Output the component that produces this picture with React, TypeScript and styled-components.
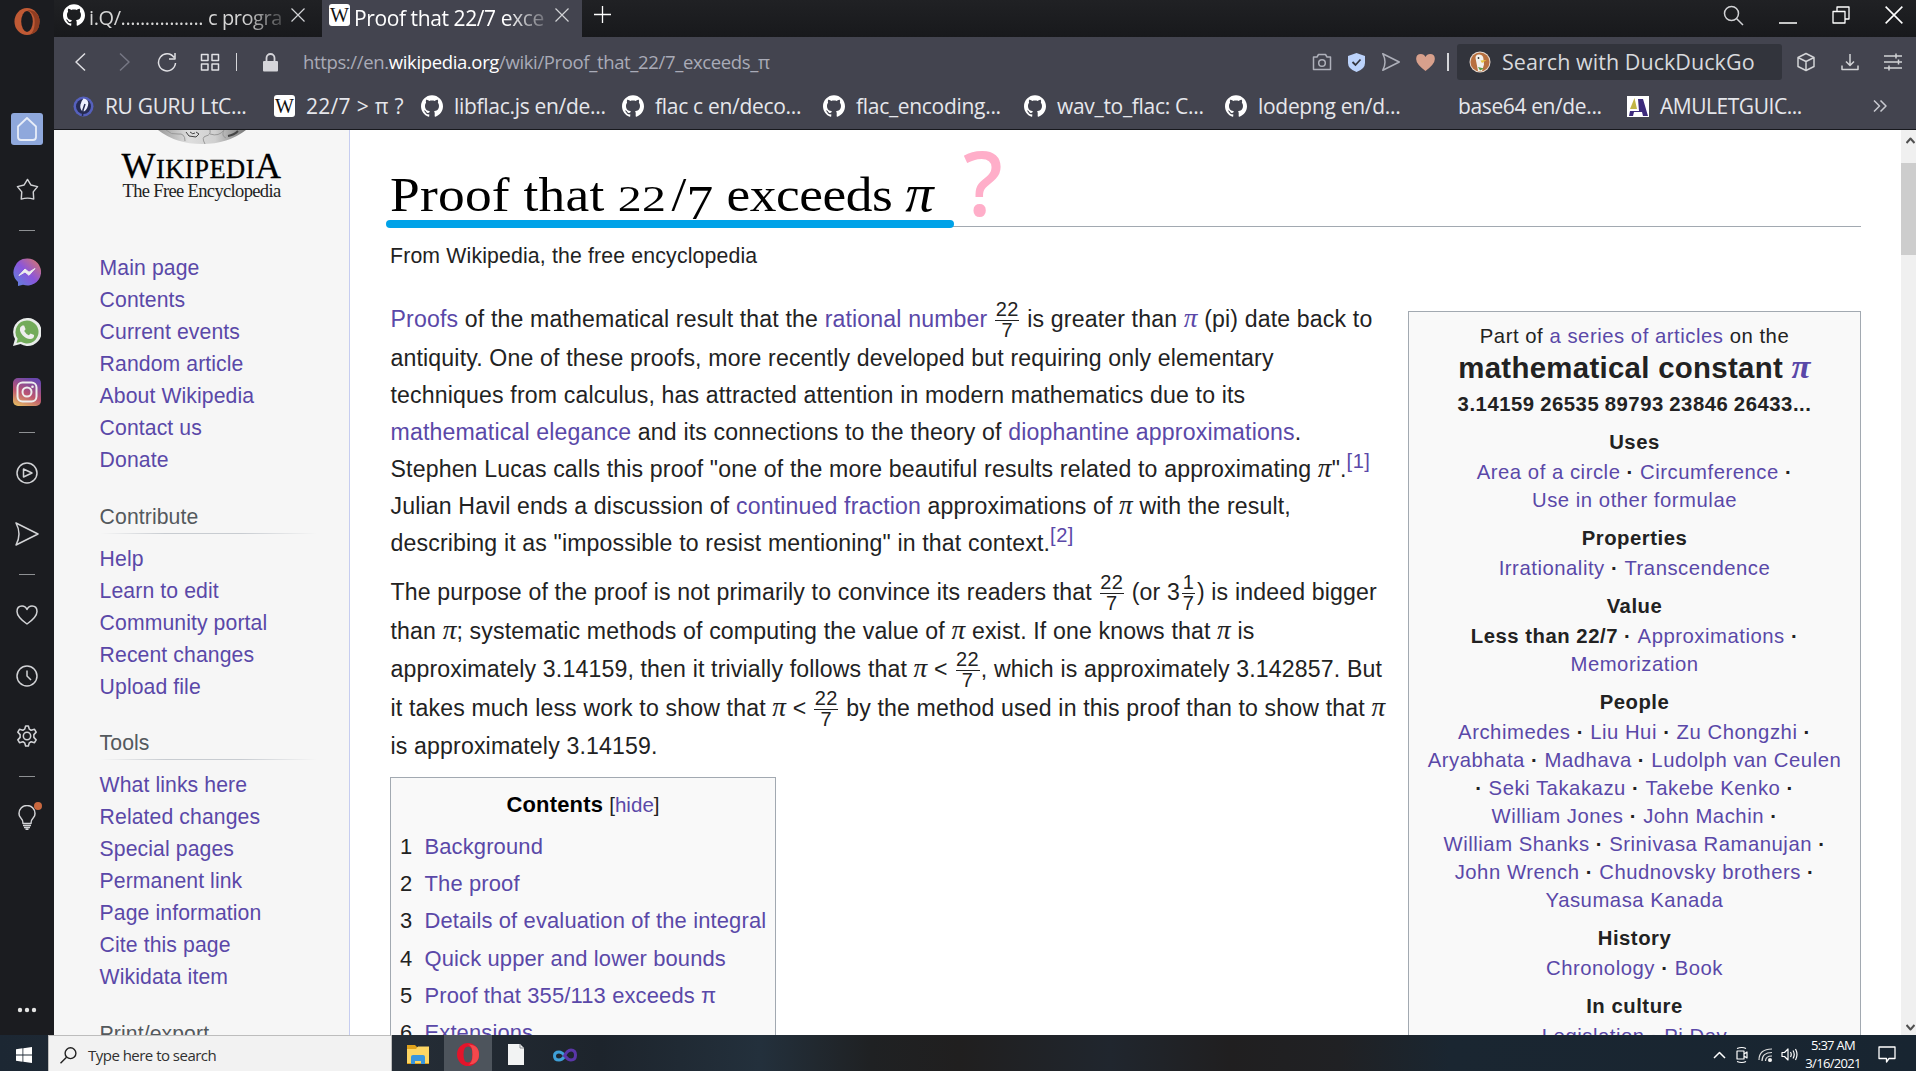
import React from "react";
import styled, { createGlobalStyle, css } from "styled-components";
import { SiGithub } from "react-icons/si";

const sans = `"Liberation Sans", Arial, sans-serif`;
const serif = `"Liberation Serif", "Times New Roman", serif`;
const ui = `"Open Sans", "Segoe UI", sans-serif`;
const visited = "#5a48a8";

const Global = createGlobalStyle`
  * { box-sizing: border-box; }
  html, body { margin: 0; padding: 0; overflow: hidden; background: #1b1c20; }
  svg { display: block; flex: none; }
`;

const Screen = styled.div`
  display: flex;
  flex-direction: column;
  width: 1916px;
  height: 1071px;
  overflow: hidden;
  font-family: ${sans};
`;
const Browser = styled.div`
  display: flex;
  height: 1035px;
`;

/* ---------- Opera side rail ---------- */
const Rail = styled.aside`
  width: 54px;
  flex: none;
  display: flex;
  flex-direction: column;
  align-items: center;
  background: #1b1c20;
`;
const RailItem = styled.div<{ $mt: number }>`
  position: relative;
  height: 32px;
  width: 32px;
  flex: none;
  margin-top: ${(p) => p.$mt}px;
  display: flex;
  align-items: center;
  justify-content: center;
`;
const HomeTile = styled(RailItem)`
  background: #8fa8dc;
  border-radius: 3px;
`;
const Dash = styled.div<{ $mt: number }>`
  width: 16px;
  height: 1px;
  flex: none;
  margin-top: ${(p) => p.$mt}px;
  background: #8e9093;
`;
const Dot = styled.span`
  position: absolute;
  right: 1px;
  top: 1px;
  width: 8px;
  height: 8px;
  border-radius: 50%;
  background: #c9683f;
`;

/* ---------- Browser chrome ---------- */
const Main = styled.div`
  width: 1862px;
  display: flex;
  flex-direction: column;
`;
const TabStrip = styled.div`
  height: 37px;
  flex: none;
  display: flex;
  background: linear-gradient(#202124, #18191c);
`;
const Tab = styled.div<{ $active?: boolean; $w: number; $pr: number }>`
  width: ${(p) => p.$w}px;
  height: 37px;
  padding: 0 ${(p) => p.$pr}px 7px ${(p) => (p.$active ? 7 : 9)}px;
  display: flex;
  align-items: center;
  background: ${(p) => (p.$active ? "#43444f" : "transparent")};
  color: ${(p) => (p.$active ? "#fff" : "#d6d6d6")};
`;
const TabTitle = styled.span<{ $size: number; $ls: number }>`
  margin-left: 4px;
  margin-right: auto;
  padding-top: 6px;
  white-space: nowrap;
  font: ${(p) => p.$size}px/30px ${ui};
  letter-spacing: ${(p) => p.$ls}px;
  mask-image: linear-gradient(90deg, #000 80%, rgba(0, 0, 0, 0.25) 100%);
`;
const NewTab = styled.div`
  padding: 5px 0 0 11px;
`;
const WindowButtons = styled.div`
  margin-left: auto;
  height: 30px;
  padding-right: 13px;
  display: flex;
  align-items: center;
  gap: 35px;
`;
const Toolbar = styled.div`
  height: 50px;
  flex: none;
  display: flex;
  align-items: center;
  padding: 0 13px 0 17px;
  background: #43444f;
`;
const NavIcons = styled.div`
  display: flex;
  align-items: center;
  gap: 23px;
`;
const Divider = styled.i<{ $w: number; $ml: number; $mr: number }>`
  width: ${(p) => p.$w}px;
  height: 18px;
  margin: 0 ${(p) => p.$mr}px 0 ${(p) => p.$ml}px;
  background: #d5d6da;
`;
const Url = styled.span`
  flex: 1;
  margin-left: 25px;
  padding-bottom: 1px;
  font: 18.5px/28px ${ui};
  letter-spacing: -0.36px;
  color: #a9abb7;
  white-space: nowrap;
  b {
    font-weight: 400;
    color: #fff;
  }
`;
const ActionIcons = styled.div`
  display: flex;
  align-items: center;
  gap: 16.5px;
`;
const SearchBox = styled.div`
  width: 325px;
  height: 36px;
  padding-left: 12px;
  display: flex;
  align-items: center;
  gap: 11px;
  border-radius: 3px;
  background: #32343c;
  color: #d8d9dd;
  font: 21.5px/30px ${ui};
  letter-spacing: 0.05px;
  white-space: nowrap;
`;
const EndIcons = styled.div`
  margin-left: 14px;
  display: flex;
  align-items: center;
  gap: 23.5px;
`;
const Bookmarks = styled.div`
  height: 43px;
  flex: none;
  display: flex;
  align-items: center;
  padding: 0 29px 4px 19px;
  background: #43444f;
  border-bottom: 1px solid #17181d;
  color: #e6e7ec;
`;
const Bookmark = styled.div<{ $w: number; $ls: number }>`
  width: ${(p) => p.$w}px;
  flex: none;
  display: flex;
  align-items: center;
  gap: 11px;
  white-space: nowrap;
  font: 21px/28px ${ui};
  letter-spacing: ${(p) => p.$ls}px;
`;
const IconSlot = styled.span`
  width: 21px;
  height: 21px;
  flex: none;
`;
const More = styled.div`
  margin-left: auto;
`;
const WTile = styled.span`
  width: 21px;
  height: 22px;
  flex: none;
  border-radius: 3px;
  background: #fff;
  color: #111;
  font: 20px/23px ${serif};
  letter-spacing: 0;
  display: flex;
  justify-content: center;
`;

/* ---------- Page ---------- */
const Page = styled.div`
  height: 905px;
  display: flex;
  overflow: hidden;
  background: #fff;
`;
const SideNav = styled.nav`
  width: 296px;
  flex: none;
  overflow: hidden;
  background: #f6f6f6;
  border-right: 1px solid #c6cdf0;
`;
const Logo = styled.div`
  height: 122px;
  display: flex;
  flex-direction: column;
  align-items: center;
  color: #000;
`;
const Wordmark = styled.div`
  height: 34px;
  margin-top: 4px;
  font: 26.5px/34px ${serif};
  letter-spacing: 0.5px;
  white-space: nowrap;
  -webkit-text-stroke: 0.3px #000;
  span {
    font-size: 36px;
  }
`;
const Tagline = styled.div`
  margin-top: -2px;
  font: 18.5px/20px ${serif};
  color: #222;
  letter-spacing: -0.65px;
  white-space: nowrap;
`;
const NavGroup = styled.section<{ $h: number }>`
  height: ${(p) => p.$h}px;
  padding-left: 45.6px;
  font-size: 21.2px;
  line-height: 32px;
  letter-spacing: 0.1px;
`;
const NavTitle = styled.h3`
  height: 42px;
  margin: 0;
  font-size: 21.2px;
  font-weight: 400;
  line-height: 32px;
  color: #54595d;
  background: linear-gradient(90deg, transparent, #c8ccd1 30%, #c8ccd1 65%, transparent) 0 32px / 217px 1px no-repeat;
`;
const NavLink = styled.a`
  display: block;
  height: 32px;
  color: ${visited};
`;
const Content = styled.article`
  position: relative;
  width: 1551px;
  flex: none;
  padding: 0 40px 0 40px;
  color: #222;
`;
const Title = styled.h1`
  height: 97px;
  margin: 0;
  padding-top: 37px;
  border-bottom: 1px solid #a2a9b1;
  color: #000;
  font: 400 49px/56px ${serif};
  white-space: nowrap;
`;
const TitleText = styled.span`
  display: inline-block;
  transform: scaleX(1.09);
  transform-origin: left;
  letter-spacing: 0.22px;
`;
const TitleTail = styled.span`
  letter-spacing: -0.4px;
`;
const OldStyle = styled.span<{ $drop?: boolean }>`
  display: inline-block;
  line-height: 1;
  ${(p) =>
    p.$drop
      ? css`
          transform: translateY(8px);
        `
      : css`
          font-size: 36px;
          transform: scaleX(1.22);
          transform-origin: left;
          margin-right: 12.5px;
        `}
`;
const Marker = styled.div`
  position: absolute;
  left: 36px;
  top: 90px;
  width: 568px;
  height: 8px;
  border-radius: 4px;
  background: #00a2e8;
`;
const Question = styled.div`
  position: absolute;
  left: 613px;
  top: 7px;
  font: 500 89px/90px "Noto Sans", sans-serif;
  color: #ffaec9;
`;
const Columns = styled.div`
  display: flex;
  justify-content: space-between;
`;
const Body = styled.div`
  width: 1000px;
`;
const Sub = styled.div`
  height: 73px;
  padding-top: 12px;
  font-size: 21.25px;
  line-height: 34px;
  letter-spacing: 0.16px;
`;
const Para = styled.div`
  margin: 0 0 11px 0.5px;
  font-size: 23.1px;
`;
const Line = styled.div<{ $h?: number }>`
  height: ${(p) => p.$h ?? 37}px;
  line-height: 37px;
  letter-spacing: 0.155px;
  white-space: nowrap;
`;
const A = styled.a`
  color: ${visited};
`;
const Pi = styled.span`
  font-family: ${serif};
  font-style: italic;
  font-size: 1.18em;
  line-height: 1;
`;
const TitlePi = styled(Pi)`
  font-size: 1.06em;
`;
const Sup = styled.a`
  position: relative;
  top: -9px;
  font-size: 0.87em;
  line-height: 1;
  letter-spacing: 0.5px;
  color: ${visited};
`;
const FracBox = styled.span<{ $m: number }>`
  display: inline-flex;
  flex-direction: column;
  align-items: center;
  margin: 0 ${(p) => p.$m}px;
  vertical-align: 10.5px;
  font-size: 20px;
  line-height: 18px;
  letter-spacing: 0.4px;
  span:first-child {
    padding: 0 0.5px 1.5px;
    border-bottom: 1px solid #222;
  }
`;
const Toc = styled.div`
  width: 386px;
  height: 300px;
  margin-top: 12px;
  padding: 9px 9px;
  border: 1px solid #a2a9b1;
  background: #f9f9f9;
  font-size: 21.95px;
`;
const TocTitle = styled.div`
  height: 40px;
  line-height: 36px;
  text-align: center;
  b {
    color: #000;
    letter-spacing: 0.2px;
  }
  span {
    font-size: 20.6px;
  }
`;
const TocRow = styled.div`
  display: flex;
  height: 37.2px;
  line-height: 39px;
  letter-spacing: 0.14px;
  white-space: nowrap;
  span {
    width: 24.5px;
    flex: none;
  }
`;
const Info = styled.aside`
  width: 453px;
  height: 800px;
  margin-top: 84px;
  padding-top: 10px;
  border: 1px solid #a2a9b1;
  background: #f9f9f9;
  text-align: center;
  font-size: 20.3px;
  letter-spacing: 0.53px;
  line-height: 28px;
  white-space: nowrap;
`;
const InfoTitle = styled.div`
  height: 34px;
  line-height: 35px;
  font-size: 29.4px;
  font-weight: 700;
  letter-spacing: 0.3px;
`;
const Digits = styled.div`
  height: 34px;
  line-height: 41px;
  display: flex;
  justify-content: center;
  gap: 5.5px;
  font-weight: 700;
`;
const InfoHead = styled.div`
  margin: 10.2px 0 1.8px;
  font-weight: 700;
`;
const InfoRow = styled.div`
  height: 28px;
`;
const ScrollBar = styled.div`
  width: 15px;
  flex: none;
  display: flex;
  flex-direction: column;
  background: #f0f0f0;
`;
const Arrow = styled.div`
  height: 33px;
  padding: 7px 0 0 5px;
`;
const Thumb = styled.div`
  height: 92px;
  background: #cdcdcd;
`;
const DownArrow = styled.div`
  margin-top: auto;
  padding: 0 0 4px 5px;
`;

/* ---------- Taskbar ---------- */
const Taskbar = styled.div`
  height: 36px;
  display: flex;
  align-items: center;
  color: #fff;
  background: linear-gradient(90deg, #1c2733 0, #252d36 400px, #1d242c 600px, #23303c 760px, #1f2123 870px, #201f1f 960px, #20262e 1110px, #201f20 1230px, #202124 1340px, #1a2631 1450px, #182531 1916px);
`;
const Start = styled.div`
  width: 48px;
  height: 36px;
  display: flex;
  align-items: center;
  justify-content: center;
  padding-top: 3px;
`;
const TaskSearch = styled.div`
  width: 344px;
  height: 36px;
  padding: 3px 0 0 11px;
  display: flex;
  align-items: center;
  gap: 11px;
  border: 1px solid #bdbdbd;
  border-bottom: 0;
  background: #f2f2f2;
  color: #303030;
  font: 15px/32px ${ui};
  letter-spacing: -0.52px;
`;
const TaskApp = styled.div<{ $active?: boolean; $w: number }>`
  width: ${(p) => p.$w}px;
  height: 36px;
  padding-top: 3px;
  display: flex;
  align-items: center;
  justify-content: center;
  background: ${(p) => (p.$active ? "#4d545c" : "transparent")};
`;
const Tray = styled.div`
  margin-left: auto;
  padding: 3px 20px 0 0;
  display: flex;
  align-items: center;
`;
const TrayIcons = styled.div`
  display: flex;
  align-items: center;
  gap: 8px;
`;
const Clock = styled.div`
  width: 70px;
  margin-right: 10px;
  font: 13px/17.5px ${ui};
  letter-spacing: -0.7px;
  text-align: center;
`;

/* ---------- Icons ---------- */
type StrokeProps = { w: number; h: number; box?: string; sw?: number; c?: string; children: React.ReactNode };
const Stroke = ({ w, h, box, sw = 1.5, c = "#d2d3d6", children }: StrokeProps) => (
  <svg width={w} height={h} viewBox={box ?? `0 0 ${w} ${h}`} fill="none" stroke={c} strokeWidth={sw} strokeLinejoin="round">
    {children}
  </svg>
);
const Close = ({ s = 14, c }: { s?: number; c?: string }) => (
  <Stroke w={s} h={s} box="0 0 14 14" sw={1.2} c={c}>
    <path d="M.5.5l13 13M13.5.5l-13 13" />
  </Stroke>
);
const OperaRing = ({ w, h, a, b }: { w: number; h: number; a: string; b: string }) => (
  <svg width={w} height={h} viewBox="0 0 26 28">
    <ellipse cx="13" cy="14" rx="13" ry="14" fill={a} />
    <path d="M13 2q13 0 13 12t-10 13.500q5-3 5-13T13 2z" fill={b} />
    <ellipse cx="13" cy="14" rx="6" ry="10.800" fill="#1b1c20" />
  </svg>
);
const Messenger = () => (
  <svg width="28" height="28" viewBox="0 0 28 28">
    <defs>
      <linearGradient id="msg" x1="0" y1="1" x2="1" y2="0">
        <stop offset="0" stopColor="#5b86dd" />
        <stop offset=".5" stopColor="#8b55da" />
        <stop offset="1" stopColor="#e07a62" />
      </linearGradient>
    </defs>
    <path d="M14 .5a13.500 13.500 0 1 1-4 26.200L5 28v-4A13.500 13.500 0 0 1 14 .5z" fill="url(#msg)" />
    <path d="M6 17.500l6-6.500 4 3.200L22 10.500l-6 6.800-4-3.300z" fill="#eee" stroke="#eee" strokeWidth="1" strokeLinejoin="round" />
  </svg>
);
const WhatsApp = () => (
  <svg width="28" height="28" viewBox="0 0 28 28">
    <path d="M14 0a14 14 0 1 1-6.500 26L0 28l2-7A14 14 0 0 1 14 0z" fill="#e9ecea" />
    <path d="M14 2.500a11.500 11.500 0 1 1-6 21.300L3.500 25l1.200-4.300A11.500 11.500 0 0 1 14 2.500z" fill="#72ab5a" />
    <path d="M9.300 7.500h1.800l1.500 3.700-1.400 1.900q1.700 3 4.600 4.200l1.800-1.900 3.500 1.700q.2 3.800-4 4-4.300-.2-7.500-3.800Q5.800 13 7.300 9.300z" fill="#eee" />
  </svg>
);
const Instagram = () => (
  <svg width="28" height="28" viewBox="0 0 28 28">
    <defs>
      <linearGradient id="ig" x1=".2" y1="1" x2=".6" y2="0">
        <stop offset="0" stopColor="#e3b763" />
        <stop offset=".45" stopColor="#bd5570" />
        <stop offset="1" stopColor="#6a47ad" />
      </linearGradient>
    </defs>
    <rect width="28" height="28" rx="5" fill="url(#ig)" />
    <g fill="none" stroke="#eee" strokeWidth="2">
      <rect x="4.500" y="4.500" width="19" height="19" rx="5" />
      <circle cx="14" cy="14" r="4.500" />
    </g>
    <circle cx="19.500" cy="8.700" r="1.300" fill="#eee" />
  </svg>
);
const SendIcon = ({ w, c }: { w: number; c?: string }) => (
  <Stroke w={w} h={w} box="0 0 24 24" sw={w > 20 ? 1.5 : 2} c={c}>
    <path d="M1 1l22 11L1 23q6-11 0-22z" />
  </Stroke>
);
const Globe = () => (
  <svg width="96" height="15" viewBox="0 0 96 15">
    <defs>
      <linearGradient id="gl" x1="0" x2="1">
        <stop offset="0" stopColor="#999" />
        <stop offset=".35" stopColor="#dedede" />
        <stop offset=".65" stopColor="#d0d0d0" />
        <stop offset="1" stopColor="#777" />
      </linearGradient>
    </defs>
    <path d="M4 0Q22 14 48 14T92 0z" fill="url(#gl)" />
    <g fill="none" stroke="#999" strokeWidth="1">
      <path d="M12 0q5 5 12 4t7 7M56 0q1 5-4 6t-1 8M56 4q9 3 14-4M70 0q-3 6 2 8" />
      <path d="M32 2l3 4 7 1 3-3-3-2M36 2q3 3 5 1" stroke="#444" />
      <path d="M74 6q6-1 10-5" stroke="#444" strokeWidth="2" />
    </g>
  </svg>
);

const Frac = ({ n, d, m = 1.3 }: { n: string; d: string; m?: number }) => (
  <FracBox $m={m}>
    <span>{n}</span>
    <span>{d}</span>
  </FracBox>
);

/* ---------- Data ---------- */
const navGroups = [
  { title: "Contribute", h: 226, links: ["Help", "Learn to edit", "Community portal", "Recent changes", "Upload file"] },
  {
    title: "Tools",
    h: 291,
    links: ["What links here", "Related changes", "Special pages", "Permanent link", "Page information", "Cite this page", "Wikidata item"],
  },
  { title: "Print/export", h: 60, links: [] },
];
const mainLinks = ["Main page", "Contents", "Current events", "Random article", "About Wikipedia", "Contact us", "Donate"];
const toc = ["Background", "The proof", "Details of evaluation of the integral", "Quick upper and lower bounds", "Proof that 355/113 exceeds π", "Extensions"];
const info: { head: string; rows: string[] }[] = [
  { head: "Uses", rows: ["Area of a circle|Circumference|", "Use in other formulae"] },
  { head: "Properties", rows: ["Irrationality|Transcendence"] },
  { head: "Value", rows: ["*Less than 22/7|Approximations|", "Memorization"] },
  {
    head: "People",
    rows: [
      "Archimedes|Liu Hui|Zu Chongzhi|",
      "Aryabhata|Madhava|Ludolph van Ceulen",
      "|Seki Takakazu|Takebe Kenko|",
      "William Jones|John Machin|",
      "William Shanks|Srinivasa Ramanujan|",
      "John Wrench|Chudnovsky brothers|",
      "Yasumasa Kanada",
    ],
  },
  { head: "History", rows: ["Chronology|Book"] },
  { head: "In culture", rows: ["Legislation|Pi Day"] },
];
const InfoLinks = ({ row }: { row: string }) => (
  <InfoRow>
    {row.split("|").map((t, i) => (
      <React.Fragment key={i}>
        {i > 0 && <b>{t ? " · " : " ·"}</b>}
        {t.startsWith("*") ? <b>{t.slice(1)}</b> : t && <A>{t}</A>}
      </React.Fragment>
    ))}
  </InfoRow>
);

const githubMarks = ["libflac.js en/de...", "flac c en/deco...", "flac_encoding...", "wav_to_flac: C...", "lodepng en/d..."];

export default function App() {
  return (
    <Screen>
      <Global />
      <Browser>
        <Rail>
          <RailItem $mt={5}>
            <OperaRing w={26} h={27} a="#c05a35" b="#8f3d22" />
          </RailItem>
          <HomeTile $mt={76}>
            <Stroke w={20} h={24} c="#e8edf8" sw={1.8}>
              <path d="M1 9.500L10 1l9 8.500V20q0 3-3 3H4q-3 0-3-3z" />
            </Stroke>
          </HomeTile>
          <RailItem $mt={28}>
            <Stroke w={23} h={23} box="0 0 24 24">
              <path d="M12 1.500l3.500 5.800 7 1.700-4.500 5.500.5 7.500Q12 20 5.500 22l.5-7.500L1.500 9l7-1.700z" />
            </Stroke>
          </RailItem>
          <Dash $mt={25} />
          <RailItem $mt={25}><Messenger /></RailItem>
          <RailItem $mt={28}><WhatsApp /></RailItem>
          <RailItem $mt={28}><Instagram /></RailItem>
          <Dash $mt={24} />
          <RailItem $mt={24}>
            <Stroke w={22} h={22}>
              <circle cx="11" cy="11" r="10" />
              <path d="M7.500 7v8l8.500-4z" />
            </Stroke>
          </RailItem>
          <RailItem $mt={29}><SendIcon w={24} /></RailItem>
          <Dash $mt={24} />
          <RailItem $mt={24}>
            <Stroke w={22} h={20}>
              <path d="M11 19Q1 12 1 6.500 1 1 6 1q3.500 0 5 3.500Q12.500 1 16 1q5 0 5 5.500Q21 12 11 19z" />
            </Stroke>
          </RailItem>
          <RailItem $mt={29}>
            <Stroke w={22} h={22}>
              <circle cx="11" cy="11" r="10" />
              <path d="M11 5.500V11l4 4" />
            </Stroke>
          </RailItem>
          <RailItem $mt={28}>
            <Stroke w={22} h={22} box="0 0 24 24" sw={1.7}>
              <circle cx="12" cy="12" r="4" />
              <path d="M9.500 4.500L10.500 1h3l1 3.500 2 1.200 3.700-1 1.800 3.100-2.500 2.700v3l2.500 2.700-1.800 3.100-3.700-1-2 1.200-1 3.500h-3l-1-3.500-2-1.200-3.700 1L2 16.200l2.500-2.700v-3L2 7.800l1.800-3.100 3.700 1z" />
            </Stroke>
          </RailItem>
          <Dash $mt={24} />
          <RailItem $mt={24}>
            <Stroke w={18} h={25}>
              <path d="M5 18.500Q5 15 2.500 12.500 1 11 1 8.500a8 8 0 0 1 16 0q0 2.500-1.500 4Q13 15 13 18.500z" />
              <path d="M5 20.500h8M6 22.500h6M7.500 24.300h3" />
            </Stroke>
            <Dot />
          </RailItem>
          <RailItem $mt={161}>
            <svg width="20" height="6" fill="#e4e4e4">
              <circle cx="3" cy="3" r="2.200" />
              <circle cx="10" cy="3" r="2.200" />
              <circle cx="17" cy="3" r="2.200" />
            </svg>
          </RailItem>
        </Rail>

        <Main>
          <TabStrip>
            <Tab $w={268} $pr={17}>
              <SiGithub size={22} color="#fff" />
              <TabTitle $size={20} $ls={-0.4}>i.Q/................. c progra</TabTitle>
              <Close />
            </Tab>
            <Tab $w={260} $pr={13} $active>
              <WTile>W</WTile>
              <TabTitle $size={21} $ls={-0.4}>Proof that 22/7 exce</TabTitle>
              <Close />
            </Tab>
            <NewTab>
              <Stroke w={19} h={19} c="#fff" sw={1.3}>
                <path d="M9.500 1v17M1 9.500h17" />
              </Stroke>
            </NewTab>
            <WindowButtons>
              <Stroke w={21} h={21}>
                <circle cx="8.500" cy="8.500" r="7" />
                <path d="M13.500 13.500l6.500 6.500" />
              </Stroke>
              <Stroke w={18} h={18} c="#fff">
                <path d="M0 17h18" />
              </Stroke>
              <Stroke w={18} h={18} c="#fff" sw={1.3}>
                <path d="M1 5.500h12v11.500H1zM5 5V1h12v12h-4" />
              </Stroke>
              <Close s={18} c="#fff" />
            </WindowButtons>
          </TabStrip>

          <Toolbar>
            <NavIcons>
              <Stroke w={20} h={20} c="#e0e0e4">
                <path d="M14 1.500L5 10l9 8.500" />
              </Stroke>
              <Stroke w={20} h={20} c="#767784">
                <path d="M6 1.500l9 8.500-9 8.500" />
              </Stroke>
              <Stroke w={20} h={20} c="#e0e0e4">
                <path d="M17 5.500A8.500 8.500 0 1 0 18.500 11M18 1v6h-6" />
              </Stroke>
              <Stroke w={20} h={20} c="#e0e0e4">
                <path d="M1.500 2.500h6.500v6H1.500zM12 2.500h6.500v6H12zM1.500 12h6.500v6H1.500zM12 12h6.500v6H12z" />
              </Stroke>
            </NavIcons>
            <Divider $w={1} $ml={16} $mr={26} />
            <svg width="15" height="19" viewBox="0 0 15 19">
              <rect y="8" width="15" height="10.500" rx="1" fill="#d5d5da" />
              <path d="M3.500 8V5a4 4 0 0 1 8 0v3" fill="none" stroke="#d5d5da" strokeWidth="1.800" />
            </svg>
            <Url>
              https://en.<b>wikipedia.org</b>/wiki/Proof_that_22/7_exceeds_π
            </Url>
            <ActionIcons>
              <Stroke w={20} h={18} c="#aeb0ba">
                <path d="M1.500 4H5l1.500-2.500h7L15 4h3.500v12.500h-17z" />
                <circle cx="10" cy="10" r="3.300" />
              </Stroke>
              <svg width="17" height="19" viewBox="0 0 17 19">
                <path d="M8.500 0L17 3v7q0 6-8.500 9Q0 16 0 10V3z" fill="#bcd3fb" />
                <path d="M4.500 9l3 3 5-5.500" fill="none" stroke="#34363f" strokeWidth="1.800" />
              </svg>
              <SendIcon w={18} c="#aeb0ba" />
              <svg width="19" height="17" viewBox="0 0 22 20" fill="#d8a08c">
                <path d="M11 20Q0 12 0 6 0 0 5.500 0 9.500 0 11 3.500 12.500 0 16.500 0 22 0 22 6q0 6-11 14z" />
              </svg>
            </ActionIcons>
            <Divider $w={2} $ml={12} $mr={8} />
            <SearchBox>
              <svg width="22" height="22" viewBox="0 0 22 22">
                <circle cx="11" cy="11" r="10.500" fill="#e8dcd2" />
                <circle cx="11" cy="11" r="9.500" fill="#b8703f" />
                <path d="M6.500 7q0-4 4-3.500 4 .5 4 5l.5 5-2 6.500H9z" fill="#f3f1ec" />
                <path d="M11.500 9.500l6-.5-4.500 3z" fill="#e8c43a" />
                <path d="M9 16l6 1.500-4 2z" fill="#5d9a43" />
                <circle cx="9.500" cy="7" r=".9" fill="#333" />
              </svg>
              Search with DuckDuckGo
            </SearchBox>
            <EndIcons>
              <Stroke w={20} h={20}>
                <path d="M10 1.500l8 4v9l-8 4-8-4v-9zM2 5.500l8 4 8-4M10 9.500v9" />
              </Stroke>
              <Stroke w={20} h={20}>
                <path d="M10 2v11M6 9.500l4 4 4-4M2 13.500v4h16v-4" />
              </Stroke>
              <Stroke w={20} h={20}>
                <path d="M1 4h18M1 10h18M1 16h18M13 1.500v5M15.500 7.500v5M6 13.500v5" />
              </Stroke>
            </EndIcons>
          </Toolbar>

          <Bookmarks>
            <Bookmark $w={201} $ls={-0.34}>
              <svg width="21" height="21" viewBox="0 0 21 21">
                <circle cx="10.500" cy="10.500" r="10" fill="#5560bd" />
                <circle cx="10.500" cy="10.500" r="7.500" fill="#262b52" />
                <path d="M10.500 2.500q6 1 4.500 7t-5.500 6q-3-3-2-7t3-6z" fill="#eef0ff" />
                <path d="M9.500 20l.5-6 2-6" stroke="#262b52" strokeWidth="1.500" fill="none" />
              </svg>
              RU GURU LtC...
            </Bookmark>
            <Bookmark $w={147} $ls={0.3}>
              <WTile>W</WTile>
              22/7 &gt; π ?
            </Bookmark>
            {githubMarks.map((m) => (
              <Bookmark key={m} $w={201} $ls={-0.3}>
                <SiGithub size={22} color="#fff" />
                {m}
              </Bookmark>
            ))}
            <Bookmark $w={201} $ls={-0.38}>
              <IconSlot />
              base64 en/de...
            </Bookmark>
            <Bookmark $w={201} $ls={-0.47}>
              <svg width="22" height="21" viewBox="0 0 22 21">
                <rect width="22" height="21" fill="#fff" />
                <path d="M7.500 2L3 13h7z" fill="#c2b545" />
                <path d="M11 3h5l5 17h-5l-1-4H7l-1 4H2l1-5h9z" fill="#3d2a7c" />
              </svg>
              AMULETGUIC...
            </Bookmark>
            <More>
              <Stroke w={14} h={12} c="#c8c9d0">
                <path d="M1 .5L6.500 6 1 11.500M7.500.5L13 6l-5.500 5.500" />
              </Stroke>
            </More>
          </Bookmarks>

          <Page>
            <SideNav>
              <Logo>
                <Globe />
                <Wordmark>
                  <span>W</span>IKIPEDI<span>A</span>
                </Wordmark>
                <Tagline>The Free Encyclopedia</Tagline>
              </Logo>
              <NavGroup $h={249}>
                {mainLinks.map((l) => (
                  <NavLink key={l}>{l}</NavLink>
                ))}
              </NavGroup>
              {navGroups.map((g) => (
                <NavGroup key={g.title} $h={g.h}>
                  <NavTitle>{g.title}</NavTitle>
                  {g.links.map((l) => (
                    <NavLink key={l}>{l}</NavLink>
                  ))}
                </NavGroup>
              ))}
            </SideNav>

            <Content>
              <Title>
                <TitleText>
                  Proof that <OldStyle>22</OldStyle>/<OldStyle $drop>7</OldStyle>
                  <TitleTail>
                    {" "}
                    exceeds <TitlePi>π</TitlePi>
                  </TitleTail>
                </TitleText>
              </Title>
              <Marker />
              <Question>?</Question>
              <Columns>
                <Body>
                  <Sub>From Wikipedia, the free encyclopedia</Sub>
                  <Para>
                    <Line $h={40}>
                      <A>Proofs</A> of the mathematical result that the <A>rational number</A> <Frac n="22" d="7" /> is greater than{" "}
                      <A><Pi>π</Pi></A> (pi) date back to
                    </Line>
                    <Line>antiquity. One of these proofs, more recently developed but requiring only elementary</Line>
                    <Line>techniques from calculus, has attracted attention in modern mathematics due to its</Line>
                    <Line>
                      <A>mathematical elegance</A> and its connections to the theory of <A>diophantine approximations</A>.
                    </Line>
                    <Line>
                      Stephen Lucas calls this proof "one of the more beautiful results related to approximating <Pi>π</Pi>".<Sup>[1]</Sup>
                    </Line>
                    <Line>
                      Julian Havil ends a discussion of <A>continued fraction</A> approximations of <Pi>π</Pi> with the result,
                    </Line>
                    <Line>
                      describing it as "impossible to resist mentioning" in that context.<Sup>[2]</Sup>
                    </Line>
                  </Para>
                  <Para>
                    <Line $h={40}>
                      The purpose of the proof is not primarily to convince its readers that <Frac n="22" d="7" /> (or 3<Frac n="1" d="7" m={2.2} />) is indeed bigger
                    </Line>
                    <Line>
                      than <Pi>π</Pi>; systematic methods of computing the value of <Pi>π</Pi> exist. If one knows that <Pi>π</Pi> is
                    </Line>
                    <Line $h={39}>
                      approximately 3.14159, then it trivially follows that <Pi>π</Pi> &lt; <Frac n="22" d="7" />, which is approximately 3.142857. But
                    </Line>
                    <Line $h={39}>
                      it takes much less work to show that <Pi>π</Pi> &lt; <Frac n="22" d="7" /> by the method used in this proof than to show that <Pi>π</Pi>
                    </Line>
                    <Line>is approximately 3.14159.</Line>
                  </Para>
                  <Toc>
                    <TocTitle>
                      <b>Contents</b> <span>[<A>hide</A>]</span>
                    </TocTitle>
                    {toc.map((t, i) => (
                      <TocRow key={t}>
                        <span>{i + 1}</span>
                        <A>{t}</A>
                      </TocRow>
                    ))}
                  </Toc>
                </Body>
                <Info>
                  <div>
                    Part of <A>a series of articles</A> on the
                  </div>
                  <InfoTitle>
                    mathematical constant <A><Pi>π</Pi></A>
                  </InfoTitle>
                  <Digits>
                    <span>3.14159</span>
                    <span>26535</span>
                    <span>89793</span>
                    <span>23846</span>
                    <span>26433...</span>
                  </Digits>
                  {info.map((g) => (
                    <React.Fragment key={g.head}>
                      <InfoHead>{g.head}</InfoHead>
                      {g.rows.map((r) => (
                        <InfoLinks key={r} row={r} />
                      ))}
                    </React.Fragment>
                  ))}
                </Info>
              </Columns>
            </Content>
            <ScrollBar>
              <Arrow>
                <Stroke w={9} h={7} c="#505050" sw={2}>
                  <path d="M.5 6l4-4.500 4 4.500" />
                </Stroke>
              </Arrow>
              <Thumb />
              <DownArrow>
                <Stroke w={9} h={7} c="#505050" sw={2}>
                  <path d="M.5 1l4 4.500 4-4.500" />
                </Stroke>
              </DownArrow>
            </ScrollBar>
          </Page>
        </Main>
      </Browser>

      <Taskbar>
        <Start>
          <svg width="16" height="16" viewBox="0 0 16 16" fill="#fff">
            <path d="M0 2.200l6.500-.9v6.300H0zM7.300 1.200L16 0v7.600H7.300zM0 8.400h6.500v6.300L0 13.800zM7.300 8.400H16V16l-8.700-1.200z" />
          </svg>
        </Start>
        <TaskSearch>
          <Stroke w={17} h={17} c="#222" sw={1.4}>
            <circle cx="10.500" cy="6.200" r="5.400" />
            <path d="M6.500 10.200L.5 16.300" />
          </Stroke>
          Type here to search
        </TaskSearch>
        <TaskApp $w={52}>
          <svg width="22" height="19" viewBox="0 0 22 19">
            <path d="M0 0h8l2 2h12v17H0z" fill="#e0a21b" />
            <path d="M0 4h9l2-2.500h11V18H0z" fill="#fdd663" />
            <path d="M4 19v-7q0-2 2-2h10q2 0 2 2v7h-4v-3H8v3z" fill="#3a96dd" />
          </svg>
        </TaskApp>
        <TaskApp $w={48} $active>
          <svg width="22" height="23" viewBox="0 0 22 23">
            <path fillRule="evenodd" d="M11 0a11 11.500 0 1 1 0 23a11 11.500 0 1 1 0-23zM11 3.500q-4.500 0-4.500 8t4.500 8 4.500-8-4.500-8z" fill="#e3142b" />
            <path d="M11 1.500q11 0 11 10T11 21.500q4.500-1 4.500-10t-4.500-10z" fill="#f4484c" />
          </svg>
        </TaskApp>
        <TaskApp $w={48}>
          <svg width="16" height="21" viewBox="0 0 16 21">
            <path d="M0 0h12l4 4v17H0z" fill="#f2f3f3" />
            <path d="M12 0v4h4" fill="none" stroke="#8b8f94" />
          </svg>
        </TaskApp>
        <TaskApp $w={50}>
          <svg width="24" height="14" viewBox="0 0 24 14" fill="none" strokeWidth="3">
            <path d="M12 8Q9 12 6 12 1.500 12 1.500 8T6 4q3 0 6 4" stroke="#3fa0d8" />
            <path d="M11 9Q14 2 18 2q4.500 0 4.500 5T18 12q-3 0-6-4" stroke="#5a36a8" />
          </svg>
        </TaskApp>
        <Tray>
          <TrayIcons>
            <Stroke w={13} h={8} c="#fff">
              <path d="M1 7l5.500-5.500L12 7" />
            </Stroke>
            <Stroke w={16} h={18} c="#fff" sw={1.2}>
              <path d="M3 5h7v8H3zM10 8l3-2v6l-3-2M3 2.500Q8 .5 12 2.500M3 15.500q5 2 9 0" />
            </Stroke>
            <Stroke w={15} h={15} c="#ddd" sw={1.2}>
              <path d="M1 13Q1 2 14 2M4 14Q4 5.500 14 5.500M7.500 14Q7.500 9 14 9" />
              <circle cx="12" cy="13" r="1.500" fill="#fff" />
            </Stroke>
            <Stroke w={17} h={15} c="#fff" sw={1.2}>
              <path d="M1 5.500h2.500L7 2v11L3.500 9.500H1zM9.500 5q1.500 2.500 0 5M12 3.500q2.500 4 0 8M14.500 2q3 5.500 0 11" />
            </Stroke>
          </TrayIcons>
          <Clock>
            5:37 AM
            <br />
            3/16/2021
          </Clock>
          <Stroke w={18} h={17} c="#fff" sw={1.3}>
            <path d="M1 1h16v11.500h-6L8.500 16v-3.500H1z" />
          </Stroke>
        </Tray>
      </Taskbar>
    </Screen>
  );
}
